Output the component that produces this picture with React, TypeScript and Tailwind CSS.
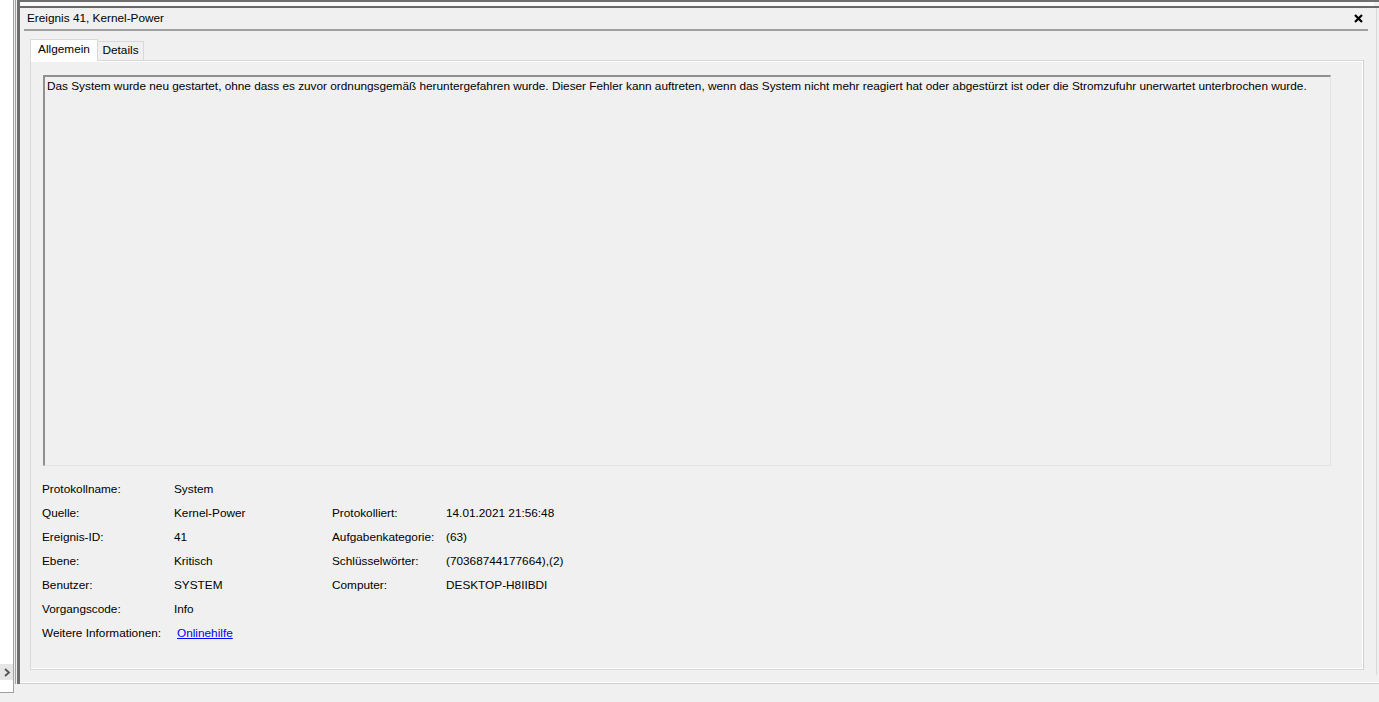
import React from "react";

const rows: [string, string, string?, string?][] = [
  ["Protokollname:", "System"],
  ["Quelle:", "Kernel-Power", "Protokolliert:", "14.01.2021 21:56:48"],
  ["Ereignis-ID:", "41", "Aufgabenkategorie:", "(63)"],
  ["Ebene:", "Kritisch", "Schlüsselwörter:", "(70368744177664),(2)"],
  ["Benutzer:", "SYSTEM", "Computer:", "DESKTOP-H8IIBDI"],
  ["Vorgangscode:", "Info"],
];

export default function App() {
  return (
    <div className="w-[1379px] h-[702px] overflow-hidden bg-[#f0f0f0] text-[11.8px] text-black font-['Liberation_Sans',sans-serif] leading-none">
      <div className="flex items-start">
        {/* left tree pane */}
        <div className="w-[14px] h-[693px] bg-white border-r border-b border-[#a0a0a0] flex flex-col justify-end pb-[12px]">
          <div className="h-[16px] w-[13px] bg-[#e6e6e6] flex items-center justify-center">
            <svg width="8" height="9" viewBox="0 0 8 9"><path d="M2 1l4 3.5L2 8" fill="none" stroke="#555" strokeWidth="1.8" /></svg>
          </div>
        </div>
        <div className="w-px h-[684px] ml-px bg-[#a0a0a0]" />
        <div className="w-[3px] h-[684px] ml-px bg-[#6d6d6d]" />

        {/* detail pane */}
        <div className="flex-1 h-[684px] flex flex-col border-b border-[#d0d0d0]">
          <div className="h-[2px] bg-[#6e6e6e]" />
          <div className="h-[4px] bg-[#fafafa] mr-[5px]" />
          <div className="h-[2px] bg-[#696969]" />

          <div className="flex-1 flex flex-col mr-[2px] border-r border-[#d8d8d8] pr-[2px]">
            <div className="h-[21px] flex items-center justify-between pl-[7px] pr-[11px]">
              <span>Ereignis 41, Kernel-Power</span>
              <svg width="9" height="9" viewBox="0 0 9 9"><path d="M1 1l7 7M8 1L1 8" stroke="#000" strokeWidth="2.2" /></svg>
            </div>
            <div className="h-[2px] bg-[#a0a0a0] ml-[4px] mr-[6px]" />

            <div className="mt-[7px] ml-[10px] mr-[10px] flex flex-col">
              <div className="flex items-end h-[22px]">
                <div className="h-[22px] w-[68px] bg-white border border-b-0 border-[#d9d9d9] flex items-center justify-center relative top-px z-10 pb-[2px]">
                  Allgemein
                </div>
                <div className="h-[19px] w-[46px] border border-l-0 border-b-0 border-[#d9d9d9] flex items-center justify-center">
                  Details
                </div>
              </div>
              <div className="h-[610px] border border-[#d9d9d9] border-r-[#d0d0d0]">
                <div className="h-full border-r border-b border-white border-t border-t-white flex flex-col pl-[12px] pt-[13px]">
                  <div className="w-[1288px] h-[391px] border-t-2 border-l-2 border-t-[#909090] border-l-[#909090] border-r border-b border-r-[#e3e3e3] border-b-[#e3e3e3] pl-[2px] pt-[4px]">
                    Das System wurde neu gestartet, ohne dass es zuvor ordnungsgemäß heruntergefahren wurde. Dieser Fehler kann auftreten, wenn das System nicht mehr reagiert hat oder abgestürzt ist oder die Stromzufuhr unerwartet unterbrochen wurde.
                  </div>

                  <div className="mt-[12px] -ml-[1px] flex flex-col">
                    {rows.map(([l, v, l2, v2]) => (
                      <div key={l} className="h-[24px] flex items-center">
                        <span className="w-[132px]">{l}</span>
                        <span className="w-[158px]">{v}</span>
                        {l2 && <span className="w-[114px]">{l2}</span>}
                        {v2 && <span>{v2}</span>}
                      </div>
                    ))}
                    <div className="h-[24px] flex items-center">
                      <span className="w-[135px]">Weitere Informationen:</span>
                      <span className="text-[#0000ff] underline">Onlinehilfe</span>
                    </div>
                  </div>
                </div>
              </div>
            </div>
          </div>
          <div className="h-[8px] border-b border-white" />
        </div>
      </div>
    </div>
  );
}
